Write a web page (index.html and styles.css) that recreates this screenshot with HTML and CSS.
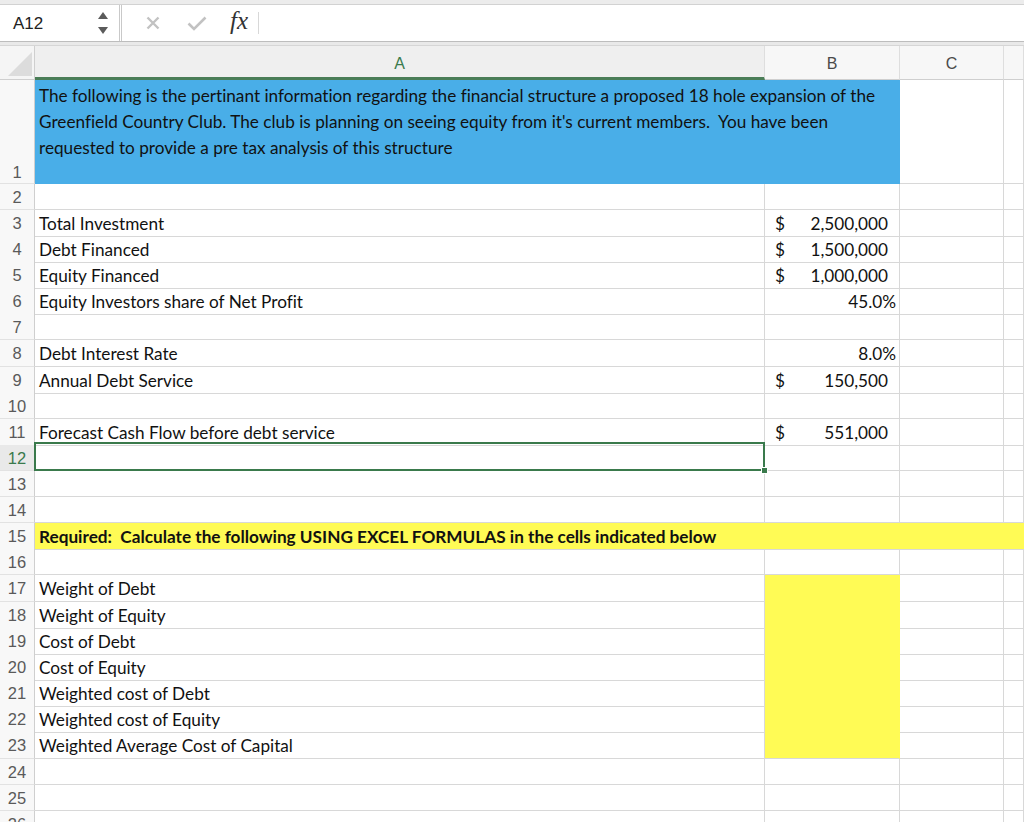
FILE: index.html
```html
<!DOCTYPE html>
<html>
<head>
<meta charset="utf-8">
<link rel="stylesheet" href="styles.css">
</head>
<body>
<div class="fbar">
  <div class="fbar-top"></div>
  <div class="fbar-main">
    <div class="namebox">
      <span class="name">A12</span>
      <span class="spin">
        <svg width="12" height="24" viewBox="0 0 12 24"><path d="M1 8 L6 1 L11 8 Z" fill="#5b5b5b"/><path d="M1 16 L6 23 L11 16 Z" fill="#5b5b5b"/></svg>
      </span>
    </div>
    <div class="fbtns">
      <svg class="ic-x" width="14" height="14" viewBox="0 0 14 14"><path d="M1.5 1.5 L12.5 12.5 M12.5 1.5 L1.5 12.5" stroke="#c2c2c2" stroke-width="2.4" fill="none"/></svg>
      <svg class="ic-ok" width="20" height="15" viewBox="0 0 20 15"><path d="M1.5 7.5 L7 13 L18.5 1.5" stroke="#c2c2c2" stroke-width="2.6" fill="none"/></svg>
      <span class="fx">fx</span>
      <span class="fsep"></span>
    </div>
    <div class="finput"></div>
  </div>
  <div class="fbar-bottom"></div>
</div>

<div class="sheet">
  <div class="row hdr">
    <div class="rh corner"><span class="tri"></span></div>
    <div class="ch sel">A</div>
    <div class="ch">B</div>
    <div class="ch">C</div>
    <div class="ch"></div>
  </div>

  <div class="row r1">
    <div class="rh bottom">1</div>
    <div class="c blue span2">The following is the pertinant information regarding the financial structure a proposed 18 hole expansion of the Greenfield Country Club. The club is planning on seeing equity from it's current members.&nbsp; You have been requested to provide a pre tax analysis of this structure</div>
    <div class="c"></div>
    <div class="c"></div>
  </div>

  <div class="row"><div class="rh">2</div><div class="c"></div><div class="c"></div><div class="c"></div><div class="c"></div></div>
  <div class="row"><div class="rh">3</div><div class="c">Total Investment</div><div class="c acct"><span>$</span><span>2,500,000</span></div><div class="c"></div><div class="c"></div></div>
  <div class="row"><div class="rh">4</div><div class="c">Debt Financed</div><div class="c acct"><span>$</span><span>1,500,000</span></div><div class="c"></div><div class="c"></div></div>
  <div class="row"><div class="rh">5</div><div class="c">Equity Financed</div><div class="c acct"><span>$</span><span>1,000,000</span></div><div class="c"></div><div class="c"></div></div>
  <div class="row"><div class="rh">6</div><div class="c">Equity Investors share of Net Profit</div><div class="c pct">45.0%</div><div class="c"></div><div class="c"></div></div>
  <div class="row"><div class="rh">7</div><div class="c"></div><div class="c"></div><div class="c"></div><div class="c"></div></div>
  <div class="row tall"><div class="rh">8</div><div class="c">Debt Interest Rate</div><div class="c pct">8.0%</div><div class="c"></div><div class="c"></div></div>
  <div class="row"><div class="rh">9</div><div class="c">Annual Debt Service</div><div class="c acct"><span>$</span><span>150,500</span></div><div class="c"></div><div class="c"></div></div>
  <div class="row"><div class="rh">10</div><div class="c"></div><div class="c"></div><div class="c"></div><div class="c"></div></div>
  <div class="row"><div class="rh">11</div><div class="c">Forecast Cash Flow before debt service</div><div class="c acct"><span>$</span><span>551,000</span></div><div class="c"></div><div class="c"></div></div>
  <div class="row"><div class="rh rsel">12</div><div class="c active"><div class="selbox"></div><div class="handle"></div></div><div class="c"></div><div class="c"></div><div class="c"></div></div>
  <div class="row"><div class="rh">13</div><div class="c"></div><div class="c"></div><div class="c"></div><div class="c"></div></div>
  <div class="row"><div class="rh">14</div><div class="c"></div><div class="c"></div><div class="c"></div><div class="c"></div></div>
  <div class="row"><div class="rh">15</div><div class="c yel bold">Required:&nbsp; Calculate the following USING EXCEL FORMULAS in the cells indicated below</div><div class="c yel"></div><div class="c yel"></div><div class="c yel"></div></div>
  <div class="row"><div class="rh">16</div><div class="c"></div><div class="c"></div><div class="c"></div><div class="c"></div></div>
  <div class="row tall"><div class="rh">17</div><div class="c">Weight of Debt</div><div class="c yb"></div><div class="c"></div><div class="c"></div></div>
  <div class="row"><div class="rh">18</div><div class="c">Weight of Equity</div><div class="c yb"></div><div class="c"></div><div class="c"></div></div>
  <div class="row"><div class="rh">19</div><div class="c">Cost of Debt</div><div class="c yb"></div><div class="c"></div><div class="c"></div></div>
  <div class="row"><div class="rh">20</div><div class="c">Cost of Equity</div><div class="c yb"></div><div class="c"></div><div class="c"></div></div>
  <div class="row"><div class="rh">21</div><div class="c">Weighted cost of Debt</div><div class="c yb"></div><div class="c"></div><div class="c"></div></div>
  <div class="row"><div class="rh">22</div><div class="c">Weighted cost of Equity</div><div class="c yb"></div><div class="c"></div><div class="c"></div></div>
  <div class="row tall"><div class="rh">23</div><div class="c">Weighted Average Cost of Capital</div><div class="c yb ylast"></div><div class="c"></div><div class="c"></div></div>
  <div class="row"><div class="rh">24</div><div class="c"></div><div class="c"></div><div class="c"></div><div class="c"></div></div>
  <div class="row"><div class="rh">25</div><div class="c"></div><div class="c"></div><div class="c"></div><div class="c"></div></div>
  <div class="row"><div class="rh">26</div><div class="c"></div><div class="c"></div><div class="c"></div><div class="c"></div></div>
</div>
</body>
</html>
```

FILE: styles.css
```css
* { box-sizing: border-box; }
html, body { margin: 0; padding: 0; }
body {
  width: 1024px;
  height: 822px;
  overflow: hidden;
  background: #ffffff;
  font-family: "Liberation Sans", Arial, sans-serif;
}

/* formula bar */
.fbar { height: 46px; display: flex; flex-direction: column; }
.fbar-top { background: #ececec; border-bottom: 1px solid #d2d2d2; height: 5px; }
.fbar-main { height: 37px; display: flex; background: #fff; border-bottom: 1px solid #bdbdbd; }
.fbar-bottom { height: 4px; background: #e9e9e9; border-bottom: 1px solid #d6d6d6; }
.namebox {
  width: 122px;
  display: flex;
  align-items: center;
  border-right: 3px double #c9c9c9;
  padding-left: 13px;
}
.name { font-size: 17px; color: #222; flex: 1; padding-top: 1px; }
.spin { width: 22px; display: flex; align-items: center; }
.spin svg { display: block; }
.fbtns { display: flex; align-items: center; width: 142px; }
.ic-x { margin-left: 24px; }
.ic-ok { margin-left: 27px; }
.fx {
  margin-left: 23px;
  font-family: "Liberation Serif", "Times New Roman", serif;
  font-style: italic;
  font-size: 25px;
  color: #333;
  letter-spacing: 0;
  margin-top: -4px;
}
.fsep { width: 1px; height: 22px; background: #d8d8d8; margin-left: 10px; }
.finput { flex: 1; }

/* sheet */
.row {
  display: grid;
  grid-template-columns: 35px 730px 135px 104px 1fr;
  height: 26px;
}
.row.tall { height: 27px; }
.row.hdr { height: 34px; }
.row.r1 { height: 104px; }

.rh {
  background: #f8f8f8;
  border-right: 1px solid #cfcfcf;
  border-bottom: 1px solid #e2e2e2;
  color: #5a5a5a;
  font-size: 16.5px;
  display: flex;
  align-items: center;
  justify-content: center;
  padding-top: 1px;
}
.rh.bottom { align-items: flex-end; padding-bottom: 1px; }
.rh.rsel { background: #e9e9e9; color: #3a7a4c; }
.corner { position: relative; background: #f5f5f5; border-bottom: 1px solid #cfcfcf; }
.tri {
  position: absolute;
  left: 8px;
  top: 6px;
  width: 0; height: 0;
  border-left: 24px solid transparent;
  border-bottom: 24px solid #dcdcdc;
}

.ch {
  background: #f7f7f7;
  border-right: 1px solid #dedede;
  border-bottom: 1px solid #cfcfcf;
  color: #4a4a4a;
  font-size: 16px;
  display: flex;
  align-items: center;
  justify-content: center;
  padding-top: 2px;
}
.ch.sel {
  background: #efefef;
  color: #3a7a4c;
  border-bottom: 3px solid #4a7d57;
  padding-top: 4px;
}

.c {
  border-right: 1px solid #d8d8d8;
  border-bottom: 1px solid #d8d8d8;
  font-family: Lato, "Open Sans", sans-serif;
  font-variant-ligatures: none;
  font-size: 17.2px;
  color: #111;
  line-height: 24px;
  padding-top: 2px;
  padding-left: 4px;
  white-space: nowrap;
  overflow: visible;
}
.span2 { grid-column: span 2; }
.blue {
  background: #49aee8;
  border-right-color: #49aee8;
  border-bottom-color: #49aee8;
  white-space: normal;
  padding: 3px 20px 0 4px;
  line-height: 26px;
}
.acct {
  display: flex;
  justify-content: space-between;
  padding-left: 10px;
  padding-right: 11px;
}
.pct { text-align: right; padding-right: 3px; }
.yel { background: #fffb55; border-right-color: #fffb55; }
.bold { font-weight: bold; }
.yb { background: #fffb55; border-bottom-color: #fffb55; border-right-color: #fffb55; }
.ylast { border-bottom-color: #d8d8d8; }

.active { position: relative; }
.selbox {
  position: absolute;
  left: -1px;
  top: -3px;
  right: -1px;
  bottom: -1px;
  border: 2px solid #3a7a4c;
}
.handle {
  position: absolute;
  right: -4px;
  bottom: -4px;
  width: 7px;
  height: 7px;
  background: #3a7a4c;
  border: 1px solid #fff;
}
```
